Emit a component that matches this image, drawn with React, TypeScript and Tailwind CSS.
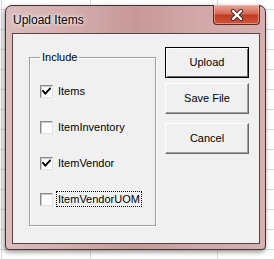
import React from 'react';

const font = "font-['Liberation_Sans',Arial,sans-serif]";

interface CheckRowProps {
    label: string;
    checked: boolean;
    focused?: boolean;
}

const CheckRow = ({ label, checked, focused }: CheckRowProps) => (
    <div className="flex items-center h-[16px]">
        {/* classic sunken 13x13 box */}
        <div className="w-[13px] h-[13px] shrink-0 bg-white border border-t-[#8a8a8a] border-l-[#8a8a8a] border-b-[#e2e2e2] border-r-[#e2e2e2] shadow-[inset_1px_1px_0_#c8c8c8] flex items-center justify-center">
            {checked && (
                <svg width="9" height="9" viewBox="0 0 9 9">
                    <path d="M1 4 L3.3 6.6 L8 1.6" fill="none" stroke="#000" strokeWidth="1.9" strokeLinecap="square" />
                </svg>
            )}
        </div>
        <span
            className={`ml-[3px] px-[1px] text-[11px] leading-[14px] text-black ${
                focused ? 'border border-dotted border-black' : 'border border-transparent'
            }`}
        >
            {label}
        </span>
    </div>
);

interface ButtonProps {
    label: string;
    isDefault?: boolean;
    className?: string;
}

const DialogButton = ({ label, isDefault, className }: ButtonProps) => (
    <button
        className={`w-[84px] h-[31px] text-[11px] text-black bg-[#f0f0f0] ${
            isDefault
                ? 'border border-black shadow-[inset_1px_1px_0_#fff,inset_-1px_-1px_0_#696969]'
                : 'border border-t-white border-l-white border-b-[#696969] border-r-[#696969] shadow-[inset_-1px_-1px_0_#a0a0a0]'
        } ${className ?? ''}`}
    >
        {label}
    </button>
);

const items = [
    { label: 'Items', checked: true },
    { label: 'ItemInventory', checked: false },
    { label: 'ItemVendor', checked: true },
    { label: 'ItemVendorUOM', checked: false, focused: true },
];

export default function App() {
    return (
        <div
            className={`${font} w-[274px] h-[259px] overflow-hidden pl-[5px] pt-[5px] bg-white bg-[linear-gradient(to_right,transparent_1px,#d8dadb_1px,#d8dadb_2px,transparent_2px,transparent_90px,#d8dadb_90px,#d8dadb_91px,transparent_91px,transparent_217px,#d8dadb_217px,#d8dadb_218px,transparent_218px),repeating-linear-gradient(to_bottom,transparent_0px,transparent_9px,#d8dadb_9px,#d8dadb_10px,transparent_10px,transparent_20px)]`}
        >
            {/* window frame */}
            <div className="w-[261px] h-[245px] flex flex-col rounded-t-[7px] rounded-b-[4px] border border-[#3e3434] bg-[#d0a3a3] pl-[6px] pr-[5px] pb-[5px] shadow-[-1px_2px_5px_rgba(0,0,0,0.45)] bg-[linear-gradient(to_right,#dcbcbc_0%,#d4acac_25%,#c89999_50%,#d2a8a8_75%,#d6b0b0_100%)]">
                {/* title bar */}
                <div className="h-[27px] flex items-start justify-between">
                    <span className="ml-[1px] mt-[6px] text-[12px] leading-[16px] text-black [text-shadow:0_0_6px_#fff,0_0_3px_#fff]">
                        Upload Items
                    </span>
                    <div className="-mt-[1px] w-[47px] h-[20px] rounded-b-[4px] border border-t-0 border-[#5e2a22] bg-[linear-gradient(to_bottom,#e9a89a_0%,#d76a55_45%,#c13b24_55%,#d0553b_100%)] shadow-[inset_0_0_0_1px_rgba(255,200,190,0.5)] flex items-center justify-center">
                        <svg width="14" height="12" viewBox="0 0 14 12">
                            <path d="M3 2 L11 10 M11 2 L3 10" stroke="#3a2a2a" strokeWidth="4.2" strokeLinecap="round" />
                            <path d="M3 2 L11 10 M11 2 L3 10" stroke="#fff" strokeWidth="2.4" strokeLinecap="round" />
                        </svg>
                    </div>
                </div>

                {/* client area */}
                <div className="flex-1 flex items-start border border-[#574646] bg-[#f0f0f0] pl-[16px] pt-[13px]">
                    <fieldset className="mt-[3px] w-[127px] h-[176px] border border-[#a0a0a0] shadow-[inset_1px_1px_0_#fff,1px_1px_0_#fff] pl-[10px]">
                        <legend className="px-[2px] text-[11px] leading-[14px] text-black">Include</legend>
                        <div className="flex flex-col gap-[20px] pt-[19px]">
                            {items.map((it) => (
                                <CheckRow key={it.label} label={it.label} checked={it.checked} focused={it.focused} />
                            ))}
                        </div>
                    </fieldset>

                    <div className="ml-[9px] flex flex-col">
                        <DialogButton label="Upload" isDefault />
                        <DialogButton label="Save File" className="mt-[5px]" />
                        <DialogButton label="Cancel" className="mt-[9px]" />
                    </div>
                </div>
            </div>
        </div>
    );
}
